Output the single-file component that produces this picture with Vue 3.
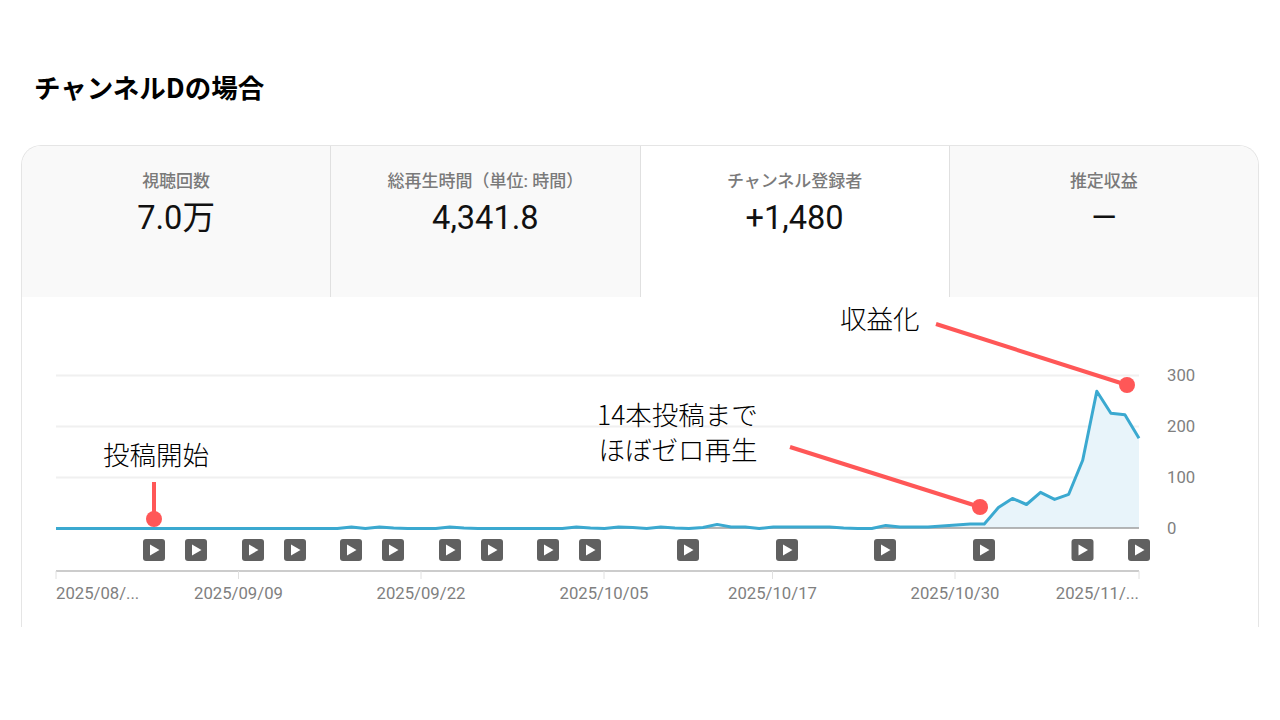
<script setup>
const tabs = [
  { label: '視聴回数', value: '7.0万' },
  { label: '総再生時間（単位: 時間）', value: '4,341.8' },
  { label: 'チャンネル登録者', value: '+1,480', active: true },
  { label: '推定収益', value: '—' },
]
const values = [
  0, 0, 0, 0, 0, 0, 0, 0, 0, 0, 0, 0, 0, 0, 0, 0, 0, 0, 0, 0, 0, 3, 0, 3, 1, 0, 0, 0, 3, 1,
  0, 0, 0, 0, 0, 0, 0, 3, 1, 0, 3, 2, 0, 3, 1, 0, 2, 8, 3, 3, 0, 3, 3, 3, 3, 3, 1, 0, 0, 6,
  3, 3, 3, 5, 7, 9, 9, 41, 59, 47, 71, 57, 67, 134, 269, 226, 223, 177,
]
const toX = (i) => 56 + (1139 - 56) * i / (values.length - 1)
const toY = (v) => 528.5 - v * 0.51
const linePoints = values.map((v, i) => `${toX(i).toFixed(1)},${toY(v).toFixed(1)}`).join(' ')
const areaPoints = `56,528 ${linePoints} 1139,528`
const grid = [
  { y: 375.5, label: '300' },
  { y: 426.5, label: '200' },
  { y: 477.5, label: '100' },
]
const videos = [154, 196, 253, 295, 351, 393, 450, 492, 548, 590, 688, 787, 885, 984, 1082.5, 1139]
const ticks = [
  { x: 56, label: '2025/08/...', anchor: 'start' },
  { x: 238.5, label: '2025/09/09', anchor: 'middle' },
  { x: 421, label: '2025/09/22', anchor: 'middle' },
  { x: 604, label: '2025/10/05', anchor: 'middle' },
  { x: 772.5, label: '2025/10/17', anchor: 'middle' },
  { x: 955, label: '2025/10/30', anchor: 'middle' },
  { x: 1139, label: '2025/11/...', anchor: 'end' },
]
const arrows = [
  { x1: 154, y1: 482, x2: 154, y2: 519 },
  { x1: 790, y1: 447, x2: 980, y2: 507 },
  { x1: 936, y1: 324, x2: 1127, y2: 385 },
]
</script>

<template>
  <main class="page">
    <h1 class="title">チャンネルDの場合</h1>
    <section class="card">
      <div class="tabs">
        <div v-for="tab in tabs" :key="tab.label" class="tab" :class="{ active: tab.active }">
          <div class="tab-label">{{ tab.label }}</div>
          <div class="tab-value">{{ tab.value }}</div>
        </div>
      </div>
      <svg class="chart" viewBox="22 297 1236 330" width="1236" height="330">
        <line v-for="g in grid" :key="g.y" x1="56" x2="1139" :y1="g.y" :y2="g.y" class="grid" />
        <polygon :points="areaPoints" class="area" />
        <line x1="56" x2="1139" y1="528" y2="528" class="base" />
        <polyline :points="linePoints" class="series" />
        <text v-for="g in grid" :key="g.label" x="1167" :y="g.y + 5.5" class="axis">{{ g.label }}</text>
        <text x="1167" y="534" class="axis">0</text>

        <g v-for="x in videos" :key="x" :transform="`translate(${x} 550)`">
          <rect x="-11" y="-11" width="22" height="22" rx="3" class="video" />
          <polygon points="-4,-5.5 5.5,0 -4,5.5" class="play" />
        </g>

        <line x1="56" x2="1139" y1="571" y2="571" class="axis-line" />
        <line v-for="t in ticks" :key="t.x" :x1="t.x" :x2="t.x" y1="571" y2="579" class="tick" />
        <text v-for="t in ticks" :key="t.label" :x="t.x" y="599" :text-anchor="t.anchor" class="axis">{{ t.label }}</text>

        <g v-for="a in arrows" :key="a.x2">
          <line :x1="a.x1" :y1="a.y1" :x2="a.x2" :y2="a.y2" class="arrow" />
          <circle :cx="a.x2" :cy="a.y2" r="8" class="dot" />
        </g>
        <text x="103" y="465" class="note">投稿開始</text>
        <text x="597" y="424.5" class="note">14本投稿まで</text>
        <text x="598.5" y="460" class="note">ほぼゼロ再生</text>
        <text x="840" y="329" class="note">収益化</text>
      </svg>
    </section>
  </main>
</template>

<style scoped>
.page {
  width: 1280px;
  height: 720px;
  overflow: hidden;
  background: #fff;
  padding-top: 69px;
  box-sizing: border-box;
  font-family: Roboto, "Noto Sans CJK JP", sans-serif;
}
.title {
  margin: 0 0 40px 34px;
  height: 36px;
  line-height: 36px;
  font-size: 26.5px;
  font-weight: 700;
  color: #000;
  font-family: "Noto Sans CJK JP", sans-serif;
}
.card {
  margin: 0 21px;
  height: 482px;
  box-sizing: border-box;
  border: 1px solid #e5e5e5;
  border-bottom: none;
  border-radius: 20px 20px 0 0;
  overflow: hidden;
  background: #fff;
}
.tabs {
  display: flex;
  height: 151px;
}
.tab {
  flex: 1;
  box-sizing: border-box;
  padding-top: 23px;
  background: #f9f9f9;
  border-right: 1px solid #e0e0e0;
  text-align: center;
}
.tab:last-child {
  border-right: none;
}
.tab.active {
  background: #fff;
}
.tab-label {
  height: 24px;
  line-height: 24px;
  font-size: 17px;
  font-weight: 500;
  color: #7a7a7a;
}
.tab-value {
  margin-top: 2px;
  height: 46px;
  line-height: 46px;
  font-size: 32.6px;
  color: #111;
}
.chart {
  display: block;
}
.grid {
  stroke: #f0f0f0;
  stroke-width: 2;
}
.area {
  fill: #e8f4fa;
}
.base {
  stroke: #9e9e9e;
  stroke-width: 1.5;
}
.series {
  fill: none;
  stroke: #3ba9d0;
  stroke-width: 3;
  stroke-linejoin: round;
}
.axis {
  font-size: 16.7px;
  fill: #808080;
  font-family: Roboto, sans-serif;
}
.video {
  fill: #606060;
}
.play {
  fill: #fff;
}
.axis-line {
  stroke: #cccccc;
  stroke-width: 2;
}
.tick {
  stroke: #e0e0e0;
  stroke-width: 1;
}
.arrow {
  stroke: #ff5757;
  stroke-width: 4;
}
.dot {
  fill: #ff5757;
}
.note {
  font-size: 26.5px;
  font-weight: 300;
  fill: #000;
  font-family: "Noto Sans CJK JP", sans-serif;
}
</style>

<style>
html, body {
  background: #fff;
}
</style>
